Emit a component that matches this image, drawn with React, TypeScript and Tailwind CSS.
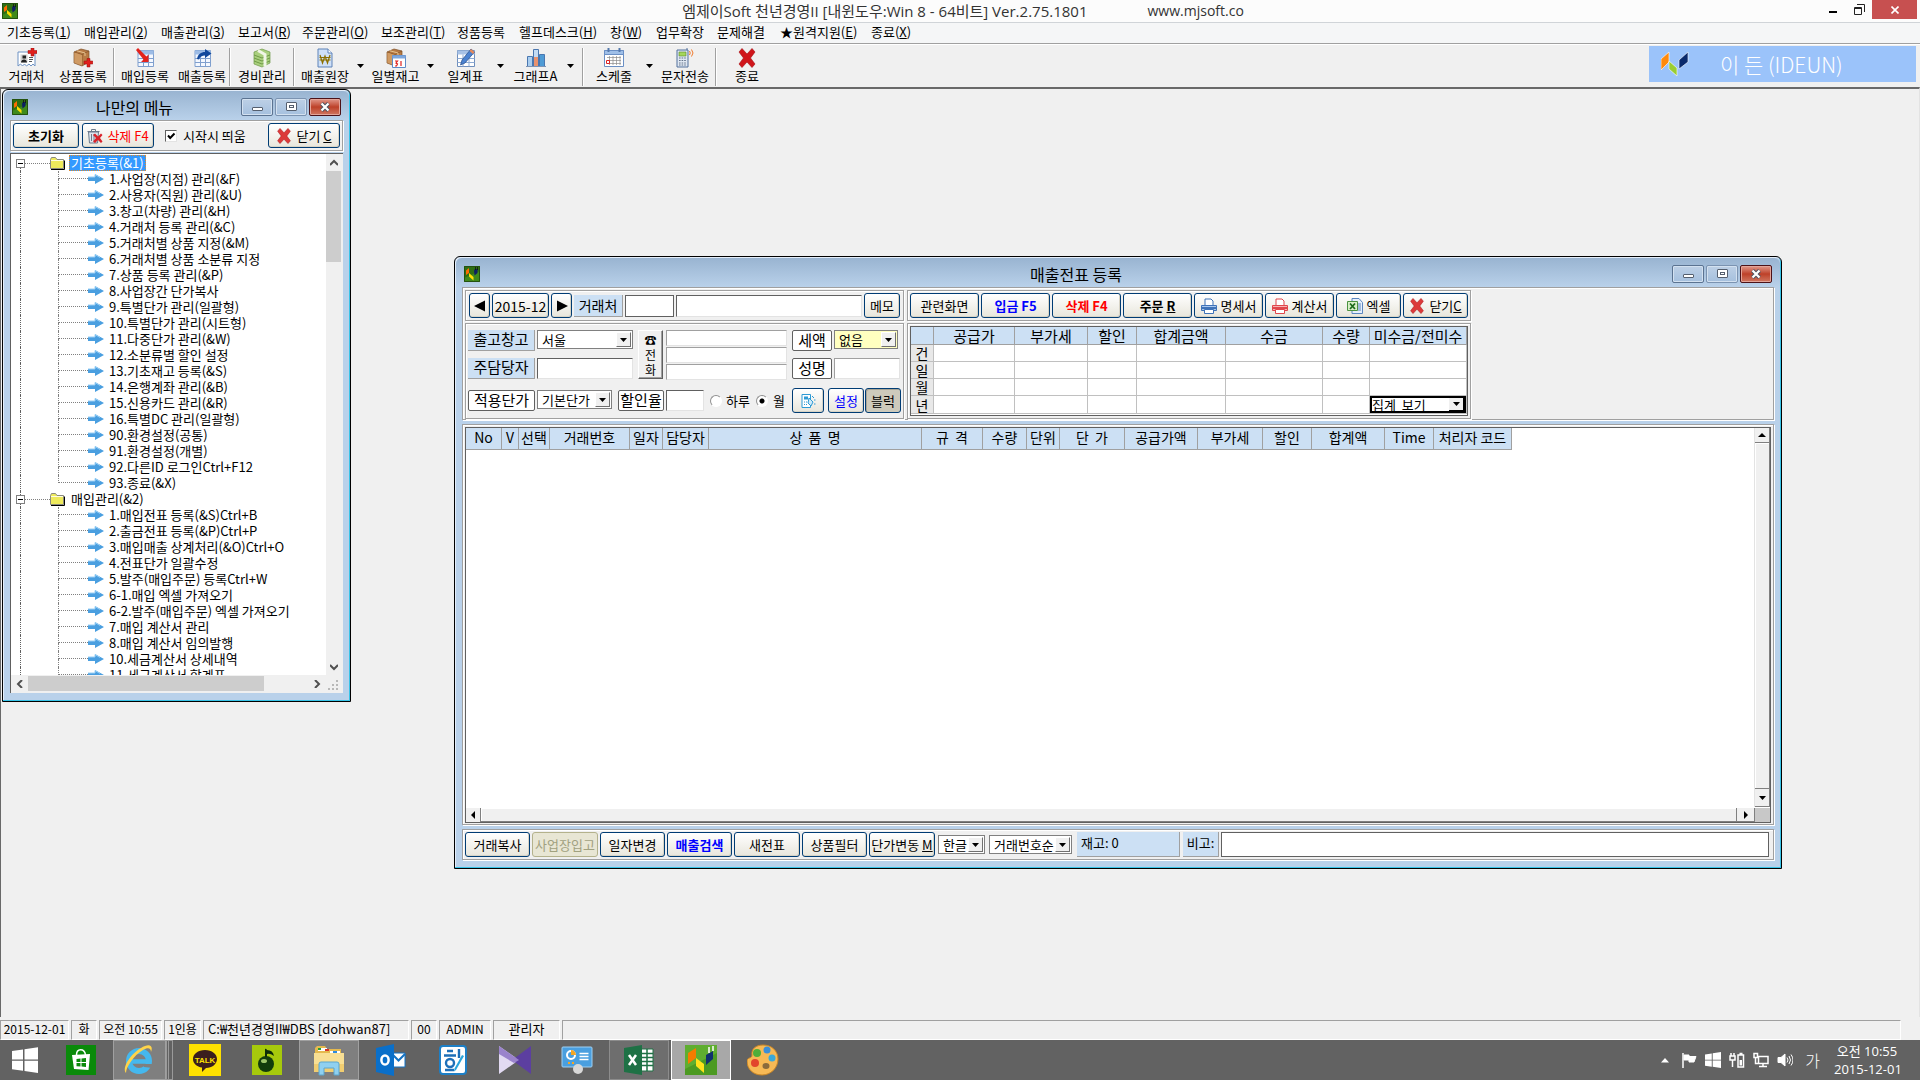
import React from "react";

const MENUS = [
  { label: "기초등록", mnemonic: "1", width: "w-[77px]" },
  { label: "매입관리", mnemonic: "2", width: "w-[77px]" },
  { label: "매출관리", mnemonic: "3", width: "w-[77px]" },
  { label: "보고서", mnemonic: "R", width: "w-[64px]" },
  { label: "주문관리", mnemonic: "O", width: "w-[79px]" },
  { label: "보조관리", mnemonic: "T", width: "w-[76px]" },
  { label: "정품등록", mnemonic: "", width: "w-[62px]" },
  { label: "헬프데스크", mnemonic: "H", width: "w-[91px]" },
  { label: "창", mnemonic: "W", width: "w-[46px]" },
  { label: "업무확장", mnemonic: "", width: "w-[61px]" },
  { label: "문제해결", mnemonic: "", width: "w-[63px]" },
  { label: "★원격지원", mnemonic: "E", width: "w-[91px]" },
  { label: "종료", mnemonic: "X", width: "w-[60px]" },
];

const TREE = [
  {
    label: "기초등록(&1)",
    selected: true,
    items: [
      "1.사업장(지점) 관리(&F)",
      "2.사용자(직원) 관리(&U)",
      "3.창고(차량) 관리(&H)",
      "4.거래처 등록 관리(&C)",
      "5.거래처별 상품 지정(&M)",
      "6.거래처별 상품 소분류 지정",
      "7.상품 등록 관리(&P)",
      "8.사업장간 단가복사",
      "9.특별단가 관리(일괄형)",
      "10.특별단가 관리(시트형)",
      "11.다중단가 관리(&W)",
      "12.소분류별 할인 설정",
      "13.기초재고 등록(&S)",
      "14.은행계좌 관리(&B)",
      "15.신용카드 관리(&R)",
      "16.특별DC 관리(일괄형)",
      "90.환경설정(공통)",
      "91.환경설정(개별)",
      "92.다른ID 로그인Ctrl+F12",
      "93.종료(&X)",
    ],
  },
  {
    label: "매입관리(&2)",
    selected: false,
    items: [
      "1.매입전표 등록(&S)Ctrl+B",
      "2.출금전표 등록(&P)Ctrl+P",
      "3.매입매출 상계처리(&O)Ctrl+O",
      "4.전표단가 일괄수정",
      "5.발주(매입주문) 등록Ctrl+W",
      "6-1.매입 엑셀 가져오기",
      "6-2.발주(매입주문) 엑셀 가져오기",
      "7.매입 계산서 관리",
      "8.매입 계산서 임의발행",
      "10.세금계산서 상세내역",
      "11.세금계산서 합계표",
    ],
  },
];

const SUMMARY_COLS = [
  { label: "", width: 23 },
  { label: "공급가", width: 81 },
  { label: "부가세", width: 73 },
  { label: "할인", width: 49 },
  { label: "합계금액", width: 89 },
  { label: "수금", width: 97 },
  { label: "수량", width: 47 },
  { label: "미수금/전미수", width: 97 },
];

const GRID_COLS = [
  { label: "No", width: 36 },
  { label: "V", width: 17 },
  { label: "선택", width: 31 },
  { label: "거래번호", width: 80 },
  { label: "일자", width: 33 },
  { label: "담당자", width: 46 },
  { label: "상  품  명", width: 213 },
  { label: "규  격", width: 61 },
  { label: "수량", width: 44 },
  { label: "단위", width: 33 },
  { label: "단  가", width: 65 },
  { label: "공급가액", width: 73 },
  { label: "부가세", width: 65 },
  { label: "할인", width: 49 },
  { label: "합계액", width: 73 },
  { label: "Time", width: 49 },
  { label: "처리자 코드", width: 78 },
];

/* ---------- icons ---------- */

const AppIcon = ({ className = "size-4" }) => (
  <svg viewBox="0 0 16 16" className={className}>
    <rect width="16" height="16" fill="#3f8a1c" />
    <path d="M0 0h16v5L0 12z" fill="#2f6f14" />
    <path d="M.5.5h15v15H.5z" fill="none" stroke="#24520f" />
    <path d="M2 4.500l3-2.500v5L2 9z" fill="#ff6a00" />
    <path d="M5 7l4.500 4v3.500L5 10.500z" fill="#ffe000" />
    <path d="M10 4.500l1-1.500h2.500v4L10.500 9.500z" fill="#0c1f63" />
    <path d="M11.500 1v3M13.500 1v3" stroke="#111" strokeWidth=".8" />
  </svg>
);

const ClientIcon = () => (
  <svg viewBox="0 0 20 20" className="size-5">
    <path d="M1 4h17v14l-2-2-2 2-2-2-2.500 2-2-2-2 2-2-2-2.500 2z" fill="#fff" stroke="#6f93c4" />
    <path d="M3.500 6.500h7v8h-7z" fill="#cfcfcf" />
    <path d="M5.500 7.500h3.500v3H5.500zM4 14.500c0-4 6-4 6 0z" fill="#222" />
    <path d="M12 9.500h4M12 11.500h4M12 13.500h3" stroke="#555" />
    <path d="M14 0h3v2.500h3v3h-3V8h-3V5.500h-3v-3h3z" fill="#e0201c" stroke="#9b0c0c" strokeWidth=".5" />
  </svg>
);

const BoxIcon = ({ overlay }: { overlay: "plus" | "calendar" }) => (
  <svg viewBox="0 0 20 20" className="size-5">
    <path d="M1 4l7-3 8 2v11l-7 4-8-3z" fill="#b87b45" stroke="#7d4e24" strokeWidth=".7" />
    <path d="M1 4l8 2.500L16 3M9 6.500V18" fill="none" stroke="#85552a" strokeWidth=".8" />
    <path d="M1.400 4.500L9 7v10.500L1.400 14.700z" fill="#cf9a63" />
    <path d="M4 2.800l8 2.200v3" fill="none" stroke="#e6c390" />
    {overlay === "plus" ? (
      <path d="M14 10.500h3V13h2.800v3H17v3h-3v-3h-3v-3h3z" fill="#e0201c" stroke="#9b0c0c" strokeWidth=".5" />
    ) : (
      <>
        <path d="M6.500 7.500h13v12h-13z" fill="#fff" stroke="#5e8bc7" />
        <path d="M6.500 7.500h13v3h-13z" fill="#7ea7dd" />
        <path d="M9 13h2.500l-1.500 2 1.500 1-1 2H9M15 13v5" fill="none" stroke="#e0201c" strokeWidth="1.200" />
      </>
    )}
  </svg>
);

const SheetArrowIcon = ({ out = false }) => (
  <svg viewBox="0 0 20 20" className="size-5">
    <path d="M3 2.500h15.500v16H3z" fill="#f4f8ff" stroke="#7f9fce" />
    <path d="M3 2.500h15.500v4H3z" fill="#9dbce6" />
    <path d="M3 10.500h15.500M3 14.500h15.500M8.500 6.500v12M13.500 6.500v12" stroke="#7f9fce" />
    {out ? (
      <path d="M5 11c1-5 4-7 8-7V1l6.500 4.500L13 10V7.500c-3 0-5 1-6 4z" fill="#12489c" />
    ) : (
      <path d="M1 2l2-2 8.500 8.500 2-2V14H6l2.500-2.500z" fill="#e3231d" />
    )}
  </svg>
);

const MoneyIcon = () => (
  <svg viewBox="0 0 20 20" className="size-5">
    <path d="M2 4l8-3 8 3v11l-8 4-8-3z" fill="#a9cf7d" stroke="#6f9a47" strokeWidth=".7" />
    <path d="M2 7l8 3 8-3M2 10l8 3 8-3M2 13l8 3 8-3" fill="none" stroke="#6f9a47" />
    <path d="M6 2.500l7 4v12" fill="none" stroke="#f1f6e6" strokeWidth="3" />
  </svg>
);

const WonDocIcon = () => (
  <svg viewBox="0 0 20 20" className="size-5">
    <path d="M3 1h10l4 4v14H3z" fill="#cfe0f7" stroke="#5e83b8" />
    <path d="M13 1v4h4" fill="#fff" stroke="#5e83b8" />
    <path d="M5 7l2.500 8L10 8l2.500 7L15 7M4.500 9.500h11M4.500 12h11" fill="none" stroke="#8c7000" strokeWidth="1.200" />
  </svg>
);

const PencilTableIcon = () => (
  <svg viewBox="0 0 20 20" className="size-5">
    <path d="M1.500 2.500h17v16h-17z" fill="#fff" stroke="#6f8fbd" />
    <path d="M1.500 2.500h17v4h-17z" fill="#a8c2e6" />
    <path d="M1.500 10.500h17M1.500 14.500h17M7 6.500v12M13 6.500v12" stroke="#8eabd4" />
    <path d="M15 1l3.500 3L9 15l-4.500 2L6 12z" fill="#4b82d0" stroke="#254c8a" strokeWidth=".7" />
    <path d="M15 1l3.500 3-1.500 2-3.500-3z" fill="#e88a5a" />
  </svg>
);

const ChartIcon = () => (
  <svg viewBox="0 0 20 20" className="size-5">
    <path d="M1.500 8.500h5v10h-5z" fill="#a9cdef" stroke="#4a77b0" />
    <path d="M7.500 1.500h5v17h-5z" fill="#e8926f" stroke="#4a77b0" />
    <path d="M8 2h4v7H8z" fill="#c4dcf5" />
    <path d="M13.500 6.500h5v12h-5z" fill="#4f9bd5" stroke="#4a77b0" />
    <path d="M0 18.500h20" stroke="#7d94b5" />
  </svg>
);

const ScheduleIcon = () => (
  <svg viewBox="0 0 20 20" className="size-5">
    <path d="M.5 2.500h19v16H.5z" fill="#fff" stroke="#6a8fc4" />
    <path d="M.5 2.500h19v4H.5z" fill="#9fbfe8" stroke="#6a8fc4" />
    <path d="M4.500 0v4M15.500 0v4" stroke="#5479ac" strokeWidth="2" />
    <path d="M3 9.500h14M3 12.500h14M3 15.500h14M5.500 8v9M9 8v9M12.500 8v9M16 8v9" stroke="#8b8b8b" strokeWidth=".7" />
    <path d="M2.500 12.500h3v3h-3z" fill="none" stroke="#d22" />
  </svg>
);

const PhoneIcon = () => (
  <svg viewBox="0 0 20 20" className="size-5">
    <path d="M2 2h11v17H2z" fill="#dfe7f2" stroke="#53719c" />
    <path d="M4 4h7v4H4z" fill="#a4d65a" stroke="#5a8a28" strokeWidth=".6" />
    <path d="M4 10h7M4 12.500h7M4 15h7M4 17h7" stroke="#64748b" strokeDasharray="1.600 1" />
    <path d="M14.500 3q1.500 2 0 4M16.500 1.500q3 3.500 0 7" fill="none" stroke="#f07a2c" />
    <path d="M12 0v2" stroke="#53719c" />
  </svg>
);

const RedX = ({ className = "size-5", color = "#d0151a" }) => (
  <svg viewBox="0 0 20 20" className={className}>
    <path
      d="M2 4l3-3.500 5 5.500 5-5.500L18 4l-4.500 6 4.500 6-3 3.500-5-5.500-5 5.500L2 16l4.500-6z"
      fill={color}
      stroke="#a50c10"
      strokeWidth=".6"
      strokeLinejoin="round"
    />
  </svg>
);

const TrashIcon = () => (
  <svg viewBox="0 0 16 16" className="size-4">
    <path d="M1.500 4h10l-1 11h-8z" fill="#dfe6ee" stroke="#6c7b8d" />
    <path d="M.5 3.500h12M4.500 3V1.500h4V3M4.500 6v7M7 6v7" stroke="#6c7b8d" fill="none" />
    <path d="M6 7l2-1.500 3 3 3-3L15.500 7 13 10l2.500 3.500-1.500 1.500-3-3-3 3L6 13.500 9 10z" fill="#d8232a" />
  </svg>
);

const PrinterIcon = ({ color, fill }: { color: string; fill: string }) => (
  <svg viewBox="0 0 16 16" className="size-4 shrink-0">
    <path d="M4 8V1h6l2 2v5" fill="#fff" stroke={color} />
    <path d="M.5 7.500h15v5H.5z" fill={fill} stroke={color} />
    <path d="M1 9h14v2H1z" fill={color} />
    <path d="M3.500 11.500h9v4h-9z" fill="#fff" stroke={color} />
  </svg>
);

const ExcelDocIcon = () => (
  <svg viewBox="0 0 16 16" className="size-4 shrink-0">
    <path d="M5 .5h7l3.500 4v11H5z" fill="#e6effb" stroke="#5b86c0" />
    <path d="M11 6h3M11 8h3M11 10h3M11 12h3" stroke="#5b86c0" />
    <path d="M.5 3.500h10v9H.5z" fill="#d8efc8" stroke="#4b9240" />
    <path d="M3 5.500l5 5.500M8 5.500L3 11" stroke="#1c6b1c" strokeWidth="1.800" />
  </svg>
);

const TabletIcon = () => (
  <svg viewBox="0 0 16 16" className="size-4">
    <path d="M2 1.500h8.500v13H2z" fill="#fff" stroke="#2d9ad4" />
    <path d="M4 3.500h4v3H4z" fill="#2d9ad4" />
    <path d="M4 9h4M4 11.500h4" stroke="#2d9ad4" strokeDasharray="1 1" />
    <path d="M9 5l4 4-2 4-3-3z" fill="#cdeafa" stroke="#2d9ad4" />
    <path d="M12 3l2 2M14 7h1.500M14 11h1.500" stroke="#2d9ad4" />
  </svg>
);

const FolderIcon = () => (
  <svg viewBox="0 0 15 13" className="h-[13px] w-[15px]">
    <path d="M1 12.500h13.500V3.500" fill="none" stroke="#000" />
    <path d="M.5 2.500l1-2h4l1.500 2h6.500v9H.5z" fill="#eeea5c" stroke="#8a8a80" />
    <path d="M1 3.500h12" stroke="#fffde0" />
  </svg>
);

const ArrowIcon = () => (
  <svg viewBox="0 0 16 10" className="h-[10px] w-4">
    <path d="M0 3h7V0l9 5-9 5V7H0z" fill="#4a9fe0" />
    <path d="M0 3h7V.5L12 3.500" fill="none" stroke="#9bd0f5" />
  </svg>
);

const Triangle = ({ className = "h-1 w-[7px]" }) => (
  <svg viewBox="0 0 8 4" preserveAspectRatio="none" className={className}>
    <path d="M0 0h8L4 4z" fill="#000" />
  </svg>
);

const Chevron = ({ d }: { d: string }) => (
  <svg viewBox="0 0 8 8" className="size-2">
    <path d={d} fill="none" stroke="#505050" strokeWidth="2" />
  </svg>
);

/* ---------- controls ---------- */

const XpButton = ({
  children,
  className = "",
}: {
  children: React.ReactNode;
  className?: string;
}) => (
  <button
    type="button"
    className={`flex h-[25px] shrink-0 items-center justify-center gap-1 rounded-[3px] border border-[#003c74] bg-linear-to-b from-white to-[#e8e6dc] text-[13px] leading-4 whitespace-nowrap shadow-[inset_-1px_-1px_0_#d8d4c6] ${className}`}
  >
    {children}
  </button>
);

const Combo = ({
  label,
  value,
  className = "",
  selectClass = "bg-white",
}: {
  label: string;
  value: string;
  className?: string;
  selectClass?: string;
}) => (
  <span className={`relative flex h-[19px] border border-[#808080] shadow-[inset_1px_1px_0_#606060] ${className}`}>
    <select aria-label={label} className={`w-full appearance-none pl-1 leading-4 outline-none ${selectClass}`}>
      <option>{value}</option>
    </select>
    <span className="pointer-events-none absolute inset-y-px right-px flex w-[15px] items-center justify-center border border-white border-r-[#707070] border-b-[#707070] bg-[#f0f0f0]">
      <Triangle />
    </span>
  </span>
);

const Field = ({ label, className = "", soft = false }: { label: string; className?: string; soft?: boolean }) => (
  <input
    aria-label={label}
    className={`min-w-0 border border-r-[#e3e3e3] border-b-[#e3e3e3] bg-white px-1 outline-none ${
      soft ? "border-t-[#a0a0a0] border-l-[#a0a0a0]" : "border-t-[#606060] border-l-[#606060]"
    } ${className}`}
  />
);

const BlueLabel = ({ children, className = "" }: { children: React.ReactNode; className?: string }) => (
  <span
    className={`border-r border-b border-[#a0a0a0] bg-[#cce0f4] text-center whitespace-nowrap ${className}`}
  >
    {children}
  </span>
);

const BoxLabel = ({ children }: { children: React.ReactNode }) => (
  <span className="h-[21px] rounded-[2px] border border-[#606060] bg-white text-center text-[15px] leading-[18px] whitespace-nowrap">
    {children}
  </span>
);

const Panel = ({ children, className = "" }: { children: React.ReactNode; className?: string }) => (
  <div className={`border border-[#a0a0a0] shadow-[1px_1px_0_#fff,inset_1px_1px_0_#fff] ${className}`}>
    {children}
  </div>
);

const ChildWindow = ({
  title,
  children,
  className = "",
}: {
  title: string;
  children: React.ReactNode;
  className?: string;
}) => (
  <section
    className={`absolute flex flex-col rounded-t-md border border-black bg-[#b9d1ea] px-[7px] pb-2 shadow-[inset_-1px_-1px_0_#38c4e8,inset_1px_1px_0_#e4eefa] ${className}`}
  >
    <header className="-mx-[6px] mt-px flex h-[29px] shrink-0 items-center rounded-t-md bg-linear-to-b from-[#99b4d1] to-[#b9d1ea] pt-[2px] pr-2 pl-2">
      <AppIcon />
      <h2 className="flex-1 text-center text-[16px] leading-5">{title}</h2>
      <div className="flex gap-[2px]">
        <button type="button" aria-label="최소화" className="flex h-[18px] w-8 items-center justify-center rounded-[2px] border border-[#5b7391] bg-linear-to-b from-[#bdd0e6] to-[#a5c0de] shadow-[inset_0_0_0_1px_#d3e1f0]">
          <span className="mt-1 h-1 w-[11px] rounded-[1px] border border-[#555f6e] bg-white" />
        </button>
        <button type="button" aria-label="최대화" className="flex h-[18px] w-8 items-center justify-center rounded-[2px] border border-[#7b93b1] bg-linear-to-b from-[#bdd0e6] to-[#a5c0de] shadow-[inset_0_0_0_1px_#d3e1f0]">
          <span className="flex h-[9px] w-[11px] items-center justify-center rounded-[1px] border border-[#555f6e] bg-white">
            <span className="h-[3px] w-[5px] border border-[#555f6e]" />
          </span>
        </button>
        <button type="button" aria-label="닫기" className="flex h-[18px] w-8 items-center justify-center rounded-[2px] border border-[#4c1218] bg-linear-to-b from-[#e0978a] via-[#bd4028] to-[#cf7660] shadow-[inset_0_0_0_1px_#e3a498]">
          <svg viewBox="0 0 12 10" className="h-[10px] w-3">
            <path d="M2.500 1.500l7 7M9.500 1.500l-7 7" stroke="#4a5563" strokeWidth="4" />
            <path d="M2.500 1.500l7 7M9.500 1.500l-7 7" stroke="#fff" strokeWidth="2.200" />
          </svg>
        </button>
      </div>
    </header>
    {children}
  </section>
);

/* ---------- main frame ---------- */

const ToolButton = ({
  icon,
  label,
  className = "w-[60px]",
}: {
  icon: React.ReactNode;
  label: string;
  className?: string;
}) => (
  <button type="button" className={`flex flex-col items-center text-[13px] leading-4 whitespace-nowrap ${className}`}>
    <span className="flex h-5 items-start">{icon}</span>
    {label}
  </button>
);

const Drop = () => (
  <button type="button" aria-label="더보기" className="flex w-[11px] justify-center pt-4">
    <Triangle />
  </button>
);

const Divider = () => <span className="h-[38px] w-[2px] border-r border-l border-r-white border-l-[#a0a0a0]" />;

const Toolbar = () => (
  <div className="flex justify-between border-t border-[#a0a0a0] bg-[#f0f0f0] shadow-[inset_0_1px_0_#fff]">
    <div className="flex pt-1 pb-px">
      <ToolButton icon={<ClientIcon />} label="거래처" className="w-[53px]" />
      <ToolButton icon={<BoxIcon overlay="plus" />} label="상품등록" />
      <Divider />
      <ToolButton icon={<SheetArrowIcon />} label="매입등록" />
      <ToolButton icon={<SheetArrowIcon out />} label="매출등록" className="w-[54px]" />
      <Divider />
      <ToolButton icon={<MoneyIcon />} label="경비관리" className="w-[62px]" />
      <Divider />
      <ToolButton icon={<WonDocIcon />} label="매출원장" />
      <Drop />
      <ToolButton icon={<BoxIcon overlay="calendar" />} label="일별재고" className="w-[59px]" />
      <Drop />
      <ToolButton icon={<PencilTableIcon />} label="일계표" className="w-[59px]" />
      <Drop />
      <ToolButton icon={<ChartIcon />} label="그래프A" className="w-[59px]" />
      <Drop />
      <span className="w-[6px]" />
      <Divider />
      <ToolButton icon={<ScheduleIcon />} label="스케줄" />
      <Drop />
      <ToolButton icon={<PhoneIcon />} label="문자전송" />
      <Divider />
      <ToolButton icon={<RedX />} label="종료" />
    </div>
    <div className="mt-[2px] mr-1 mb-[5px] flex w-[267px] items-center bg-[#9bc3fa] pl-3 text-[21px] leading-6 font-light text-white">
      <svg viewBox="0 0 28 26" className="mr-[31px] h-[26px] w-7">
        <path d="M0 8l8-7v10l-8 8z" fill="#ff8a0c" stroke="#fff" strokeWidth=".6" />
        <path d="M8 10l8 7v8l-8-7z" fill="#9acd32" stroke="#fff" strokeWidth=".6" />
        <path d="M18 9l9-8v10l-9 7z" fill="#0a2a6c" stroke="#fff" strokeWidth=".6" />
      </svg>
      이 든 (IDEUN)
    </div>
  </div>
);

/* ---------- tree window ---------- */

const TreeWindow = () => (
  <ChildWindow title="나만의 메뉴" className="top-0 left-px h-[613px] w-[349px]">
    <Panel className="flex shrink-0 items-center bg-[#f0f0f0] px-[2px] py-[2px]">
      <XpButton className="w-[66px] font-bold">초기화</XpButton>
      <XpButton className="ml-[3px] w-[72px] text-[#ff0000]">
        <TrashIcon />
        삭제 F4
      </XpButton>
      <label className="ml-[11px] flex flex-1 items-center gap-[6px] text-[13px] leading-4">
        <span className="relative flex">
          <input
            type="checkbox"
            defaultChecked
            className="size-3 appearance-none border border-t-[#606060] border-r-[#e3e3e3] border-b-[#e3e3e3] border-l-[#606060] bg-white"
          />
          <svg viewBox="0 0 12 12" className="pointer-events-none absolute inset-0 size-3">
            <path d="M3 5.500l2.200 2.500L9.500 3.500" fill="none" stroke="#000" strokeWidth="2" />
          </svg>
        </span>
        시작시 띄움
      </label>
      <XpButton className="w-[72px]">
        <RedX className="size-4" color="#dc3a3a" />
        <span>
          닫기 <u>C</u>
        </span>
      </XpButton>
    </Panel>
    <div className="mt-[2px] flex min-h-0 flex-1 flex-col border-t border-l border-[#606060] bg-[#f0f0f0] pb-px">
      <div className="flex min-h-0 flex-1">
        <ul className="flex-1 overflow-hidden bg-white pt-px pl-px text-[13px] leading-4">
          {TREE.map((group, gi) => (
            <li key={group.label}>
              <div className="flex h-4 items-center pl-1">
                <span className="flex h-4 w-[9px] flex-col items-center">
                  <span className={gi === 0 ? "h-1" : "h-1 border-l border-dotted border-[#606060]"} />
                  <button
                    type="button"
                    aria-label="접기"
                    className="flex size-[9px] shrink-0 items-center justify-center border border-[#808080] bg-white"
                  >
                    <span className="h-px w-[5px] bg-black" />
                  </button>
                  <span className="flex-1 border-l border-dotted border-[#606060]" />
                </span>
                <span className="w-[25px] border-t border-dotted border-[#808080]" />
                <FolderIcon />
                <span
                  className={
                    group.selected
                      ? "ml-1 bg-[#3399ff] px-[2px] text-white outline-1 -outline-offset-1 outline-[#e08a2c] outline-dotted"
                      : "ml-1 px-[2px]"
                  }
                >
                  {group.label}
                </span>
              </div>
              <ul>
                {group.items.map((item, i) => (
                  <li key={item} className="flex h-4 items-center whitespace-nowrap">
                    <span className="ml-2 h-4 w-[38px] border-l border-dotted border-[#606060]" />
                    <span className="flex h-4 w-[30px] flex-col">
                      <span className="h-2 border-b border-l border-dotted border-[#808080]" />
                      {(gi > 0 || i < group.items.length - 1) && (
                        <span className="h-2 border-l border-dotted border-[#808080]" />
                      )}
                    </span>
                    <ArrowIcon />
                    <span className="ml-[5px]">{item}</span>
                  </li>
                ))}
              </ul>
            </li>
          ))}
        </ul>
        <div className="mr-[2px] flex w-[15px] flex-col items-center">
          <span className="flex h-[17px] items-center">
            <Chevron d="M0 6l4-4 4 4" />
          </span>
          <span className="h-[91px] w-full bg-[#cdcdcd]" />
          <span className="flex flex-1 items-end pb-1">
            <Chevron d="M0 2l4 4 4-4" />
          </span>
        </div>
      </div>
      <div className="flex h-[17px] shrink-0 items-center">
        <span className="flex w-[17px] justify-center">
          <Chevron d="M6 0L2 4l4 4" />
        </span>
        <span className="h-[15px] w-[236px] bg-[#cdcdcd]" />
        <span className="flex flex-1 justify-end pr-1">
          <Chevron d="M2 0l4 4-4 4" />
        </span>
        <svg viewBox="0 0 16 16" className="mr-[2px] size-4">
          <path d="M11 4h2v2h-2zM11 8h2v2h-2zM11 12h2v2h-2zM7 8h2v2H7zM7 12h2v2H7zM3 12h2v2H3z" fill="#b8b8b8" />
        </svg>
      </div>
    </div>
  </ChildWindow>
);

/* ---------- sales slip window ---------- */

const SlipToolbar = () => (
  <Panel className="flex items-center gap-[2px] px-[3px] py-[2px]">
    <XpButton className="w-[21px]">
      <svg viewBox="0 0 12 12" className="size-3">
        <path d="M0 6l11-5.500v11z" />
      </svg>
    </XpButton>
    <XpButton className="w-[57px] text-[14px]">2015-12</XpButton>
    <XpButton className="w-[21px]">
      <svg viewBox="0 0 12 12" className="size-3">
        <path d="M12 6L1 .5v11z" />
      </svg>
    </XpButton>
    <BlueLabel className="h-[22px] w-[49px] text-[14px] leading-5">거래처</BlueLabel>
    <input aria-label="거래처 코드" className="h-[22px] w-[49px] border border-[#606060] bg-white outline-none" />
    <Field label="거래처명" className="h-[22px] flex-1" />
    <XpButton className="w-9">메모</XpButton>
  </Panel>
);

const SlipForm = () => (
  <Panel className="flex flex-1 flex-col px-[2px] pt-[6px] text-[13px]">
    <div className="flex">
      <div className="grid grid-cols-[67px_96px] items-start gap-x-[2px] gap-y-[6px]">
        <BlueLabel className="h-[21px] text-[15px] leading-[18px]">출고창고</BlueLabel>
        <Combo label="출고창고" value="서울" />
        <BlueLabel className="h-[21px] text-[15px] leading-[18px]">주담당자</BlueLabel>
        <Field label="주담당자" className="h-[21px]" />
      </div>
      <button
        type="button"
        className="ml-[5px] flex h-[49px] w-[25px] flex-col items-center justify-center border border-white border-r-[#606060] border-b-[#606060] bg-[#f0f0f0] text-[12px] leading-[15px] shadow-[inset_-1px_-1px_0_#a0a0a0]"
      >
        <span>☎</span>
        <span>전</span>
        <span>화</span>
      </button>
      <div className="ml-[3px] flex w-[121px] flex-col gap-px">
        <Field soft label="전화 1" className="h-4" />
        <Field soft label="전화 2" className="h-4" />
        <Field soft label="전화 3" className="h-4" />
      </div>
      <div className="ml-[5px] grid grid-cols-[40px_66px] items-start gap-x-[2px] gap-y-[6px]">
        <BoxLabel>세액</BoxLabel>
        <Combo label="세액" value="없음" className="w-16" selectClass="bg-[#ffffc0]" />
        <BoxLabel>성명</BoxLabel>
        <Field soft label="성명" className="h-[21px]" />
      </div>
    </div>
    <div className="mt-2 flex items-center">
      <div className="grid grid-cols-[67px_75px] gap-x-[2px]">
        <BoxLabel>적용단가</BoxLabel>
        <Combo label="적용단가" value="기본단가" />
      </div>
      <div className="ml-[6px] grid grid-cols-[46px_38px] gap-x-[2px]">
        <BoxLabel>할인율</BoxLabel>
        <Field label="할인율" className="h-[21px]" />
      </div>
      <label className="ml-[6px] flex items-center gap-1">
        <input
          type="radio"
          name="range"
          className="size-3 appearance-none rounded-full border border-[#909090] border-r-white border-b-white bg-white"
        />
        하루
      </label>
      <label className="ml-[6px] flex items-center gap-[5px]">
        <input
          type="radio"
          name="range"
          defaultChecked
          className="size-3 appearance-none rounded-full border border-[#909090] border-r-white border-b-white bg-[radial-gradient(circle,#000_2px,#fff_3px)]"
        />
        월
      </label>
      <div className="ml-auto flex">
        <XpButton className="w-8">
          <TabletIcon />
        </XpButton>
        <XpButton className="ml-1 w-9 text-[#0000ff]">설정</XpButton>
        <button
          type="button"
          aria-pressed="true"
          className="ml-px h-[25px] w-9 rounded-[3px] border border-[#003c74] bg-[#cdcabb] leading-4 shadow-[inset_1px_1px_0_#a8a596]"
        >
          블럭
        </button>
      </div>
    </div>
  </Panel>
);

const SlipActions = () => (
  <Panel className="flex gap-[2px] px-[2px] py-[2px]">
    <XpButton className="w-[69px]">관련화면</XpButton>
    <XpButton className="w-[69px] font-bold text-[#0000ff]">입금 F5</XpButton>
    <XpButton className="w-[69px] font-bold text-[#ff0000]">삭제 F4</XpButton>
    <XpButton className="w-[69px] font-bold">
      <span>
        주문 <u>R</u>
      </span>
    </XpButton>
    <XpButton className="w-[69px]">
      <PrinterIcon color="#3f73b8" fill="#a9c8f0" />
      명세서
    </XpButton>
    <XpButton className="w-[69px]">
      <PrinterIcon color="#e0464c" fill="#f7b2b2" />
      계산서
    </XpButton>
    <XpButton className="w-[65px]">
      <ExcelDocIcon />
      엑셀
    </XpButton>
    <XpButton className="w-[65px]">
      <RedX className="size-4 shrink-0" color="#dc3a3a" />
      <span>
        닫기<u>C</u>
      </span>
    </XpButton>
  </Panel>
);

const SummaryTable = () => (
  <Panel className="flex-1 p-[2px]">
    <div className="h-[90px] border border-[#606060] bg-white">
      <table className="w-[556px] table-fixed border-separate border-spacing-0 text-[15px] leading-4">
        <colgroup>
          {SUMMARY_COLS.map((c, i) => (
            <col key={i} style={{ width: c.width }} />
          ))}
        </colgroup>
        <thead>
          <tr>
            {SUMMARY_COLS.map((c, i) => (
              <th
                key={i}
                className="h-[18px] border-r border-b border-[#a0a0a0] bg-[#cce0f4] p-0 font-normal whitespace-nowrap"
              >
                {c.label}
              </th>
            ))}
          </tr>
        </thead>
        <tbody>
          {["건", "일", "월", "년"].map((row) => (
            <tr key={row}>
              <th className="h-[17px] border-r border-b border-[#c0c0c0] bg-[#e8e8e8] p-0 text-[14px] font-normal">{row}</th>
              {SUMMARY_COLS.slice(1).map((c) => (
                <td key={c.label} className="h-[17px] border-r border-b border-[#c0c0c0] p-0">
                  {row === "년" && c.label === "미수금/전미수" && (
                    <span className="relative flex h-[17px] border-2 border-black">
                      <select aria-label="집계" className="w-full appearance-none bg-white text-[13px] leading-[13px] outline-none">
                        <option>집계 &nbsp;보기</option>
                      </select>
                      <span className="pointer-events-none absolute inset-y-0 right-0 flex w-[15px] items-center justify-center border-r border-b border-black bg-[#f0f0f0]">
                        <Triangle />
                      </span>
                    </span>
                  )}
                </td>
              ))}
            </tr>
          ))}
        </tbody>
      </table>
    </div>
  </Panel>
);

const SlipGrid = () => (
  <Panel className="mt-1 flex min-h-0 flex-1 bg-[#f0f0f0] px-[2px] pt-[2px] pb-px">
    <div className="flex flex-1 flex-col border border-[#606060]">
      <div className="flex flex-1">
        <div className="flex-1 bg-white">
          <table className="w-[1046px] table-fixed border-separate border-spacing-0 text-[14px] leading-[18px]">
            <colgroup>
              {GRID_COLS.map((c) => (
                <col key={c.label} style={{ width: c.width }} />
              ))}
            </colgroup>
            <thead>
              <tr>
                {GRID_COLS.map((c) => (
                  <th
                    key={c.label}
                    className="h-[22px] border-r border-b border-[#a0a0a0] bg-[#cce0f4] p-0 pb-[3px] font-normal whitespace-pre"
                  >
                    {c.label}
                  </th>
                ))}
              </tr>
            </thead>
          </table>
        </div>
        <div className="flex w-4 flex-col border-l border-[#e3e3e3]">
          <span className="flex h-[15px] items-center justify-center border-r border-b border-[#808080]">
            <svg viewBox="0 0 8 4" className="h-1 w-2">
              <path d="M0 4h8L4 0z" />
            </svg>
          </span>
          <span className="flex-1 border-r border-b border-[#808080] shadow-[inset_1px_1px_0_#fff]" />
          <span className="flex h-[18px] items-center justify-center border-r border-b border-[#808080]">
            <Triangle />
          </span>
        </div>
      </div>
      <div className="flex h-[15px] border-t border-white">
        <span className="flex w-[15px] items-center justify-center border-r border-[#808080]">
          <svg viewBox="0 0 4 8" className="h-2 w-1">
            <path d="M4 0v8L0 4z" />
          </svg>
        </span>
        <span className="flex-1 border-r border-b border-[#808080] shadow-[inset_1px_1px_0_#fff]" />
        <span className="flex w-[17px] items-center justify-center border-b border-[#808080]">
          <svg viewBox="0 0 4 8" className="h-2 w-1">
            <path d="M0 0v8l4-4z" />
          </svg>
        </span>
        <span className="w-4 border-l border-[#808080] bg-[#c8c8c8]" />
      </div>
    </div>
  </Panel>
);

const SlipFooter = () => (
  <Panel className="mt-1 flex shrink-0 items-center gap-[2px] bg-[#f0f0f0] py-[2px] pr-1 pl-[2px] text-[13px]">
    <XpButton className="w-[65px]">거래복사</XpButton>
    <button
      type="button"
      disabled
      className="h-[25px] w-[66px] shrink-0 rounded-[3px] border border-[#b4b28c] bg-[#e8e6d4] leading-4 whitespace-nowrap text-[#a1a17f]"
    >
      사업장입고
    </button>
    <XpButton className="w-[65px]">일자변경</XpButton>
    <XpButton className="w-[65px] font-bold text-[#0000ff]">매출검색</XpButton>
    <XpButton className="w-[66px]">새전표</XpButton>
    <XpButton className="w-[65px]">상품필터</XpButton>
    <XpButton className="w-[66px]">
      <span>
        단가변동 <u>M</u>
      </span>
    </XpButton>
    <Combo label="입력 언어" value="한글" className="ml-px w-[47px]" />
    <Combo label="정렬" value="거래번호순" className="ml-[2px] w-[83px]" />
    <BlueLabel className="ml-[3px] h-[25px] w-[103px] pl-1 text-left leading-[22px]">재고: 0</BlueLabel>
    <label htmlFor="memo" className="ml-px h-[25px] w-9 shrink-0 border-r border-b border-[#a0a0a0] bg-[#cce0f4] text-center leading-[22px]">
      비고:
    </label>
    <input id="memo" className="h-[25px] min-w-0 flex-1 border border-[#606060] bg-white px-1 outline-none" />
  </Panel>
);

const SlipWindow = () => (
  <ChildWindow title="매출전표 등록" className="top-[167px] left-[453px] h-[613px] w-[1328px]">
    <Panel className="flex shrink-0 gap-[3px] bg-[#f0f0f0] px-[2px] pt-[2px]">
      <div className="flex w-[439px] flex-col gap-[2px]">
        <SlipToolbar />
        <SlipForm />
      </div>
      <div className="flex w-[564px] flex-col gap-[2px]">
        <SlipActions />
        <SummaryTable />
      </div>
    </Panel>
    <SlipGrid />
    <SlipFooter />
  </ChildWindow>
);

/* ---------- status bar and taskbar ---------- */

const StatusCell = ({ children, className = "" }: { children?: React.ReactNode; className?: string }) => (
  <span
    className={`h-5 border border-t-[#a0a0a0] border-r-white border-b-white border-l-[#a0a0a0] text-center leading-4 whitespace-nowrap ${className}`}
  >
    {children}
  </span>
);

const StatusBar = () => (
  <footer className="flex gap-[2px] bg-[#f0f0f0] pt-[3px] pr-[19px] text-[12px]">
    <StatusCell className="w-[69px]">2015-12-01</StatusCell>
    <StatusCell className="w-[26px]">화</StatusCell>
    <StatusCell className="w-[63px]">오전 10:55</StatusCell>
    <StatusCell className="w-[37px]">1인용</StatusCell>
    <StatusCell className="w-[206px] pl-1 text-left text-[13px]">C:₩천년경영II₩DBS [dohwan87]</StatusCell>
    <StatusCell className="w-[26px]">00</StatusCell>
    <StatusCell className="w-[52px]">ADMIN</StatusCell>
    <StatusCell className="w-[67px] text-[13px]">관리자</StatusCell>
    <StatusCell className="flex-1" />
  </footer>
);

const TaskItem = ({
  label,
  className = "",
  children,
}: {
  label: string;
  className?: string;
  children: React.ReactNode;
}) => (
  <button type="button" aria-label={label} className={`flex h-10 w-[60px] items-center justify-center border ${className || "border-transparent"}`}>
    {children}
  </button>
);

const WindowsLogo = ({ className = "size-[26px]" }) => (
  <svg viewBox="0 0 26 26" className={className} fill="#fff">
    <path d="M0 4l11-1.600V12.400H0zM12.500 2.200L26 .2v12.200H12.500zM0 13.800h11v10L0 22.200zM12.500 13.800H26V26l-13.500-2z" />
  </svg>
);

const Taskbar = () => (
  <nav className="flex h-10 shrink-0 items-center justify-between bg-[#626262] text-white">
    <div className="flex gap-[2px]">
      <button type="button" aria-label="시작" className="flex h-10 w-[49px] items-center justify-center">
        <WindowsLogo />
      </button>
      <TaskItem label="스토어">
        <svg viewBox="0 0 30 30" className="size-[30px]">
          <path d="M0 0h30v30H0z" fill="#0a8a0a" />
          <path d="M6 10l18-1-1.500 16L8 24z" fill="#fff" />
          <path d="M10.500 10c0-7 8-7 9 0" fill="none" stroke="#fff" strokeWidth="1.500" />
          <path d="M10.500 14l4-.5v3.500h-4zM15.500 13.500l4.500-.5v4h-4.500zM10.500 18h4v3.500l-4-.3zM15.500 18H20v4l-4.500-.4z" fill="#0a8a0a" />
        </svg>
      </TaskItem>
      <span className="flex w-[60px]">
        <TaskItem label="Internet Explorer" className="border-[#a0a0a0] bg-[#7f7f7f]">
          <svg viewBox="0 0 32 32" className="size-8">
            <circle cx="16" cy="17" r="10" fill="none" stroke="#45b8ee" strokeWidth="6" />
            <path d="M7 17.500h19" stroke="#45b8ee" strokeWidth="4.500" />
            <path d="M19 20h11v4l-9-1z" fill="#7f7f7f" />
            <path d="M3 29C-2 24 9 7 22 2c6-2 8 1 6 6 0-4-3-5-8-2C11 11 3 23 3 29z" fill="#ffd44a" />
          </svg>
        </TaskItem>
        <span className="w-1 border border-[#9a9a9a]" />
        <span className="w-1 border border-l-0 border-[#9a9a9a]" />
      </span>
      <TaskItem label="카카오톡">
        <svg viewBox="0 0 32 32" className="size-8">
          <path d="M0 0h32v32H0z" fill="#fde000" />
          <path d="M16 6c7 0 12 4 12 9s-5 9-11 9l-4 4v-4.500C8 23 4 19.500 4 15c0-5 5-9 12-9z" fill="#3b1e1e" />
          <text x="16" y="18.500" textAnchor="middle" fontSize="8" fontWeight="bold" fill="#fde000" fontFamily="Liberation Sans">
            TALK
          </text>
        </svg>
      </TaskItem>
      <TaskItem label="곰오디오">
        <svg viewBox="0 0 30 30" className="size-[30px]">
          <path d="M0 0h30v30H0z" fill="#a6c90c" />
          <circle cx="14" cy="19" r="8" fill="#123c0c" />
          <path d="M13 12V4q1-1 2 1 6 0 7 6-4-3-7-2v3z" fill="#0c2c08" />
          <ellipse cx="12" cy="16" rx="3" ry="2" fill="#9cc46a" />
        </svg>
      </TaskItem>
      <TaskItem label="파일 탐색기" className="border-[#a0a0a0] bg-[#7f7f7f]">
        <svg viewBox="0 0 32 32" className="size-8">
          <path d="M2 4l2-2h8l2 3h14v8H2z" fill="#e5b94e" />
          <path d="M5 4h9v3H5zM17 7h10v3H17z" fill="#fff" />
          <path d="M5 4h3v2H5z" fill="#2a9d3a" />
          <path d="M12 5h4v2h-4z" fill="#d8352a" />
          <path d="M20 7h4v2h-4z" fill="#2d8be0" />
          <path d="M1 9h30v19H1z" fill="#f8df94" />
          <path d="M1 20h30v8H1z" fill="#f1cd70" />
          <path d="M6 31V20q0-2 2-2h16q2 0 2 2v11h-5v-7H11v7z" fill="#8fd0f0" stroke="#5aa6cf" />
        </svg>
      </TaskItem>
      <TaskItem label="Outlook">
        <svg viewBox="0 0 30 32" className="h-8 w-[30px]">
          <path d="M16 9h13v14H16z" fill="#fff" stroke="#1272c4" />
          <path d="M16 10l6.500 6.500L29 10" fill="none" stroke="#1272c4" strokeWidth="2" />
          <path d="M0 4l18-4v32L0 28z" fill="#0a6fc9" />
          <ellipse cx="9" cy="16" rx="3.600" ry="4.600" fill="none" stroke="#fff" strokeWidth="2.500" />
        </svg>
      </TaskItem>
      <TaskItem label="한글">
        <svg viewBox="0 0 28 30" className="h-[30px] w-7">
          <rect x="1" y="1" width="26" height="28" rx="3" fill="#fff" stroke="#1d7fc6" strokeWidth="2" />
          <path d="M8 6h6M5 10.500h12" stroke="#1d6fb8" strokeWidth="2.400" />
          <circle cx="11" cy="18" r="4" fill="none" stroke="#1d6fb8" strokeWidth="2.400" />
          <path d="M20 4v9M6 25h9" stroke="#1d6fb8" strokeWidth="2.400" />
          <path d="M25 11L17 25l-2 1.500.500-3L23 10z" fill="#2aa5dc" />
        </svg>
      </TaskItem>
      <TaskItem label="KMPlayer">
        <svg viewBox="0 0 32 28" className="h-7 w-8">
          <path d="M0 0l20 14L0 28z" fill="#e2daf2" />
          <path d="M32 0v28L13 14z" fill="#5c3fa0" />
          <path d="M0 0l20 14-5 3L0 8z" fill="#9a83cc" />
        </svg>
      </TaskItem>
      <TaskItem label="제어판">
        <svg viewBox="0 0 32 30" className="h-[30px] w-8">
          <rect x="1" y="2" width="30" height="20" rx="1" fill="#4a9fdf" stroke="#9fd0f2" />
          <circle cx="10" cy="10" r="4" fill="none" stroke="#fff" strokeWidth="2" />
          <path d="M10 5a5 5 0 0 1 5 5h-5z" fill="#f5a623" />
          <path d="M18.500 8.500h9M18.500 11.500h9M18.500 14.500h9" fill="none" stroke="#fff" strokeWidth="1.500" />
          <path d="M7 18h2M11 18h2" stroke="#f5a623" strokeWidth="2" />
          <circle cx="17" cy="24" r="5" fill="#d8d8d8" />
        </svg>
      </TaskItem>
      <TaskItem label="Excel" className="border-[#8c8c8c] bg-[#6e6e6e]">
        <svg viewBox="0 0 30 30" className="size-[30px]">
          <path d="M16 4h13v22H16z" fill="#fff" stroke="#1e7145" />
          <path d="M16 8.500h13M16 12.500h13M16 16.500h13M16 20.500h13M23 4v22" stroke="#1e7145" strokeWidth="1.500" />
          <path d="M0 3l18-3v30L0 27z" fill="#1e7145" />
          <path d="M5 10l7 10M12 10L5 20" stroke="#fff" strokeWidth="2.500" />
        </svg>
      </TaskItem>
      <TaskItem label="천년경영" className="border-white bg-[#a8a8a8]">
        <svg viewBox="0 0 32 30" className="h-[30px] w-8">
          <path d="M0 0h32v30H0z" fill="#4c9a22" />
          <path d="M0 0h32v8L0 24z" fill="#5fae30" />
          <path d="M3 8l8-5v10l-8 6z" fill="#f57c00" />
          <path d="M11 13l8 6v9l-8-7z" fill="#ffe21a" />
          <path d="M21 10l7-4v8l-7 6z" fill="#10306e" />
          <path d="M24 2v6M28 1v5" stroke="#fff" strokeWidth="1.500" />
        </svg>
      </TaskItem>
      <TaskItem label="그림판">
        <svg viewBox="0 0 32 32" className="size-8">
          <path d="M16 1c9 0 15 6 15 14 0 9-7 16-16 16C6 31 0 25 0 17 0 13 5 15 5 11 4 5 9 1 16 1z" fill="#f7b955" stroke="#c98524" />
          <circle cx="10" cy="9" r="4" fill="#4fae3a" />
          <circle cx="20" cy="6" r="3.500" fill="#3b8fd8" />
          <circle cx="25" cy="14" r="3.500" fill="#3aa8d8" />
          <circle cx="8" cy="19" r="4" fill="#e2452c" />
          <ellipse cx="19" cy="22" rx="3.500" ry="3" fill="#8a6a3c" />
        </svg>
      </TaskItem>
    </div>
    <div className="flex items-center gap-2 pr-5">
      <svg viewBox="0 0 10 6" className="mr-[3px] h-[6px] w-[10px]">
        <path d="M1 5.500L5 1l4 4.500z" fill="#fff" />
      </svg>
      <svg viewBox="0 0 16 16" className="size-4" fill="none" stroke="#fff">
        <path d="M2 1v15" strokeWidth="1.500" />
        <path d="M3 3h5v1.500h7L13 10H8V8H3z" fill="#fff" />
      </svg>
      <WindowsLogo className="size-4" />
      <svg viewBox="0 0 16 16" className="size-4" fill="none" stroke="#fff" strokeWidth="1.500">
        <path d="M9 3h5.500v12H9zM10.500 1.500h3M1 4h5v4H1zM2 1v3M5 1v3M3.500 8v7" />
        <path d="M10.500 8h2.500v5.500h-2.500z" fill="#fff" stroke="none" />
      </svg>
      <svg viewBox="0 0 16 16" className="size-4" fill="none" stroke="#fff" strokeWidth="1.500">
        <path d="M5.500 4.500H15v7H5.500zM10 11.500V14M6 14.500h8M1 1.500h3.500v4H1zM2.500 5.500v6h3" />
      </svg>
      <svg viewBox="0 0 16 16" className="size-4" fill="none" stroke="#fff">
        <path d="M1 5.500h3L8 2v12l-4-3.500H1z" fill="#fff" />
        <path d="M10 5.500q2 2.500 0 5M12 4q3 4 0 8M14 2.500q4 5.500 0 11" />
      </svg>
      <span className="ml-1 text-[16px] leading-5 font-light">가</span>
      <div className="ml-[6px] w-[66px] text-center font-['Open_Sans','Noto_Sans_CJK_KR',sans-serif] text-[13px] leading-[18px] whitespace-nowrap">
        <div>오전 10:55</div>
        <div>2015-12-01</div>
      </div>
    </div>
  </nav>
);

const App = () => {
  return (
    <div className="flex min-h-screen flex-col overflow-hidden bg-[#f0f0f0] font-['Noto_Sans_CJK_KR',sans-serif] text-black">
      <header className="flex h-[22px] shrink-0 items-start bg-[#fcfcfc]">
        <AppIcon className="mt-[3px] ml-[2px] size-4" />
        <h1 className="flex flex-1 justify-center gap-[60px] pl-[88px] font-['Open_Sans','Noto_Sans_CJK_KR',sans-serif] text-[15px] leading-[22px] font-normal whitespace-nowrap text-[#333]">
          <span>엠제이Soft 천년경영II [내윈도우:Win 8 - 64비트] Ver.2.75.1801</span>
          <span className="text-[14px]">www.mjsoft.co</span>
        </h1>
        <div className="mr-[3px] flex h-[19px] items-center">
          <button type="button" aria-label="최소화" className="flex h-full w-[26px] items-center justify-center pt-1">
            <span className="h-[2px] w-2 bg-black" />
          </button>
          <button type="button" aria-label="이전 크기로" className="flex h-full w-[26px] items-center justify-center">
            <svg viewBox="0 0 11 11" className="size-[11px]" fill="none" stroke="#222">
              <path d="M.5 3.500h7v7h-7zM.5 4.500h7M3 .5h7.500V8" />
            </svg>
          </button>
          <button type="button" aria-label="닫기" className="flex h-full w-[45px] items-center justify-center bg-[#c75050]">
            <svg viewBox="0 0 8 8" className="size-2">
              <path d="M.5.5l7 7M7.500.5l-7 7" stroke="#fff" strokeWidth="1.600" />
            </svg>
          </button>
        </div>
      </header>
      <nav className="flex h-[21px] shrink-0 items-start border-t border-[#d0d4d8] bg-[#f5f6f7] pl-[7px] text-[13px] leading-[18px]">
        {MENUS.map((menu) => (
          <button key={menu.label} type="button" className={`text-left whitespace-nowrap ${menu.width}`}>
            {menu.label}
            {menu.mnemonic && (
              <>
                (<u>{menu.mnemonic}</u>)
              </>
            )}
          </button>
        ))}
      </nav>
      <Toolbar />
      <main className="relative flex-1 border-t-2 border-r border-l border-[#696969] border-r-[#e3e3e3]">
        <TreeWindow />
        <SlipWindow />
      </main>
      <StatusBar />
      <Taskbar />
    </div>
  );
};

export default App;
